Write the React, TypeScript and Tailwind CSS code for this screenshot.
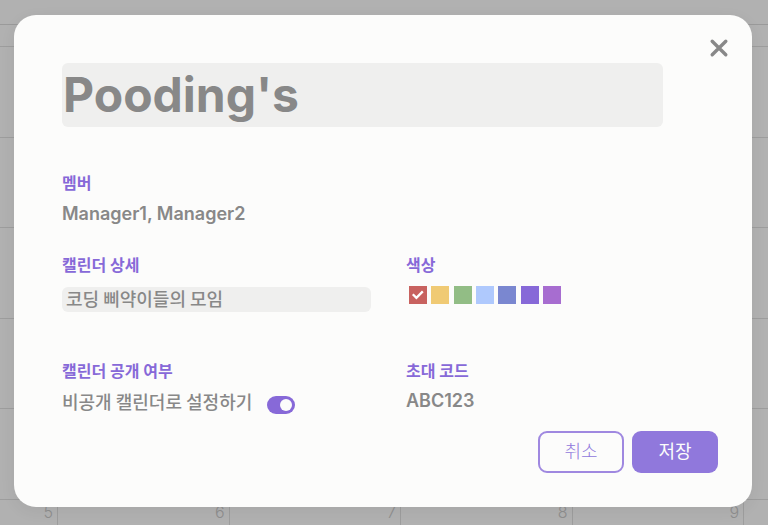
import { useState } from "react";

const SWATCHES = [
  { name: "빨강", bg: "bg-[#c8625f]" },
  { name: "노랑", bg: "bg-[#f0ca74]" },
  { name: "초록", bg: "bg-[#92bd85]" },
  { name: "하늘", bg: "bg-[#afc9fd]" },
  { name: "파랑", bg: "bg-[#7a87d0]" },
  { name: "보라", bg: "bg-[#8769d8]" },
  { name: "자주", bg: "bg-[#a76dd0]" },
];

const WEEKS = [
  ["", "", "", "", "", ""],
  ["", "", "", "", "", ""],
  ["", "", "", "", "", ""],
  ["", "", "", "", "", ""],
  ["", "", "", "", "", ""],
  ["5", "6", "7", "8", "9", ""],
];

const LABEL = "block text-base leading-6 font-bold text-[#8769d8]";
const VALUE = "text-lg leading-6 font-semibold text-[#888888]";
const VALUE_KO = "font-['Noto_Sans_CJK_KR',sans-serif] text-lg leading-6 font-medium text-[#888888]";

function CalendarBackdrop() {
  return (
    <div aria-hidden="true" className="absolute inset-0 overflow-hidden bg-[#b1b1b1] text-[#8e8e8e]">
      <div className="h-6" />
      <div className="h-[22px] border-t border-[#9a9a9a]" />
      <div className="flex h-[543px] flex-col">
        {WEEKS.map((week, i) => (
          <div key={i} className="grid flex-1 grid-cols-[58px_repeat(4,1fr)_24px] border-t border-[#9d9d9d]">
            {week.map((day, j) => (
              <div
                key={j}
                className="border-r border-[#9d9d9d] pr-1 text-right text-base leading-6 font-light last:border-r-0"
              >
                {day}
              </div>
            ))}
          </div>
        ))}
      </div>
    </div>
  );
}

function ColorPicker() {
  const [color, setColor] = useState(0);
  return (
    <fieldset>
      <legend className={LABEL}>색상</legend>
      <div className="mt-[9px] ml-[3px] flex w-[152px] justify-between">
        {SWATCHES.map((s, i) => (
          <label key={s.name} className="grid size-[18px] cursor-pointer">
            <input
              type="radio"
              name="color"
              aria-label={s.name}
              checked={color === i}
              onChange={() => setColor(i)}
              className={`col-start-1 row-start-1 size-[18px] appearance-none ${s.bg}`}
            />
            {color === i && (
              <svg
                viewBox="0 0 18 18"
                className="pointer-events-none col-start-1 row-start-1 size-[18px]"
                fill="none"
                stroke="#fff"
                strokeWidth="2.3"
              >
                <path d="M3.8 8.2 L7.4 11.8 L13.8 5.4" />
              </svg>
            )}
          </label>
        ))}
      </div>
    </fieldset>
  );
}

export default function App() {
  const [title, setTitle] = useState("Pooding's");
  const [detail, setDetail] = useState("코딩 삐약이들의 모임");
  const [hidden, setHidden] = useState(true);

  return (
    <div className="relative min-h-screen font-[Inter,'Noto_Sans_CJK_KR',sans-serif]">
      <CalendarBackdrop />
      <div className="relative pt-[15px] pr-4 pb-[18px] pl-[14px]">
        <form
          role="dialog"
          aria-label="캘린더 설정"
          onSubmit={(e) => e.preventDefault()}
          className="relative rounded-[22px] bg-[#fcfcfb] px-[34px] pt-12 pb-[34px] shadow-[0_4px_16px_rgba(0,0,0,0.06)]"
        >
          <button type="button" aria-label="닫기" className="absolute top-[22px] right-[22px] size-[22px] text-[#888888]">
            <svg viewBox="0 0 22 22" className="size-[22px]" fill="none" stroke="currentColor" strokeWidth="3.4" strokeLinecap="round">
              <path d="M4.2 4.2 L17.8 17.8 M17.8 4.2 L4.2 17.8" />
            </svg>
          </button>

          <div className="px-[14px]">
            <div className="pr-[41px]">
              <input
                aria-label="캘린더 이름"
                value={title}
                onChange={(e) => setTitle(e.target.value)}
                className="block h-16 w-full rounded-md bg-[#efefee] px-px text-5xl leading-[64px] font-bold text-[#888888] outline-none"
              />
            </div>

            <section className="mt-11">
              <h2 className={LABEL}>멤버</h2>
              <p className={`mt-[7px] ${VALUE}`}>Manager1, Manager2</p>
            </section>

            <div className="mt-[27px] grid grid-cols-[344fr_298fr]">
              <div className="h-[106px] pr-[35px]">
                <label htmlFor="detail" className={LABEL}>
                  캘린더 상세
                </label>
                <input
                  id="detail"
                  value={detail}
                  onChange={(e) => setDetail(e.target.value)}
                  className={`mt-[10px] block h-[25px] w-full rounded-md bg-[#efefee] px-1 pb-[3px] outline-none ${VALUE_KO}`}
                />
              </div>
              <ColorPicker />
              <div>
                <h2 className={LABEL}>캘린더 공개 여부</h2>
                <div className="mt-[6px] flex">
                  <label htmlFor="hidden" className={VALUE_KO}>
                    비공개 캘린더로 설정하기
                  </label>
                  <input
                    id="hidden"
                    type="checkbox"
                    role="switch"
                    checked={hidden}
                    onChange={(e) => setHidden(e.target.checked)}
                    className="mt-[7px] ml-[15px] flex h-[18px] w-7 cursor-pointer appearance-none items-center rounded-full bg-[#b5b5b5] px-[3px] before:size-3 before:rounded-full before:bg-[#fcfcfb] checked:justify-end checked:bg-[#8769d8]"
                  />
                </div>
              </div>
              <div>
                <h2 className={LABEL}>초대 코드</h2>
                <p className={`mt-[6px] ${VALUE}`}>ABC123</p>
              </div>
            </div>
          </div>

          <div className="mt-[17px] flex justify-end gap-2">
            <button
              type="button"
              className="h-[42px] w-[86px] rounded-[9px] border-2 border-[#9f88e0] text-lg leading-6 font-light text-[#9078dc]"
            >
              취소
            </button>
            <button type="submit" className="h-[42px] w-[86px] rounded-[9px] bg-[#9078dc] text-lg leading-6 text-[#fcfcfb]">
              저장
            </button>
          </div>
        </form>
      </div>
    </div>
  );
}
